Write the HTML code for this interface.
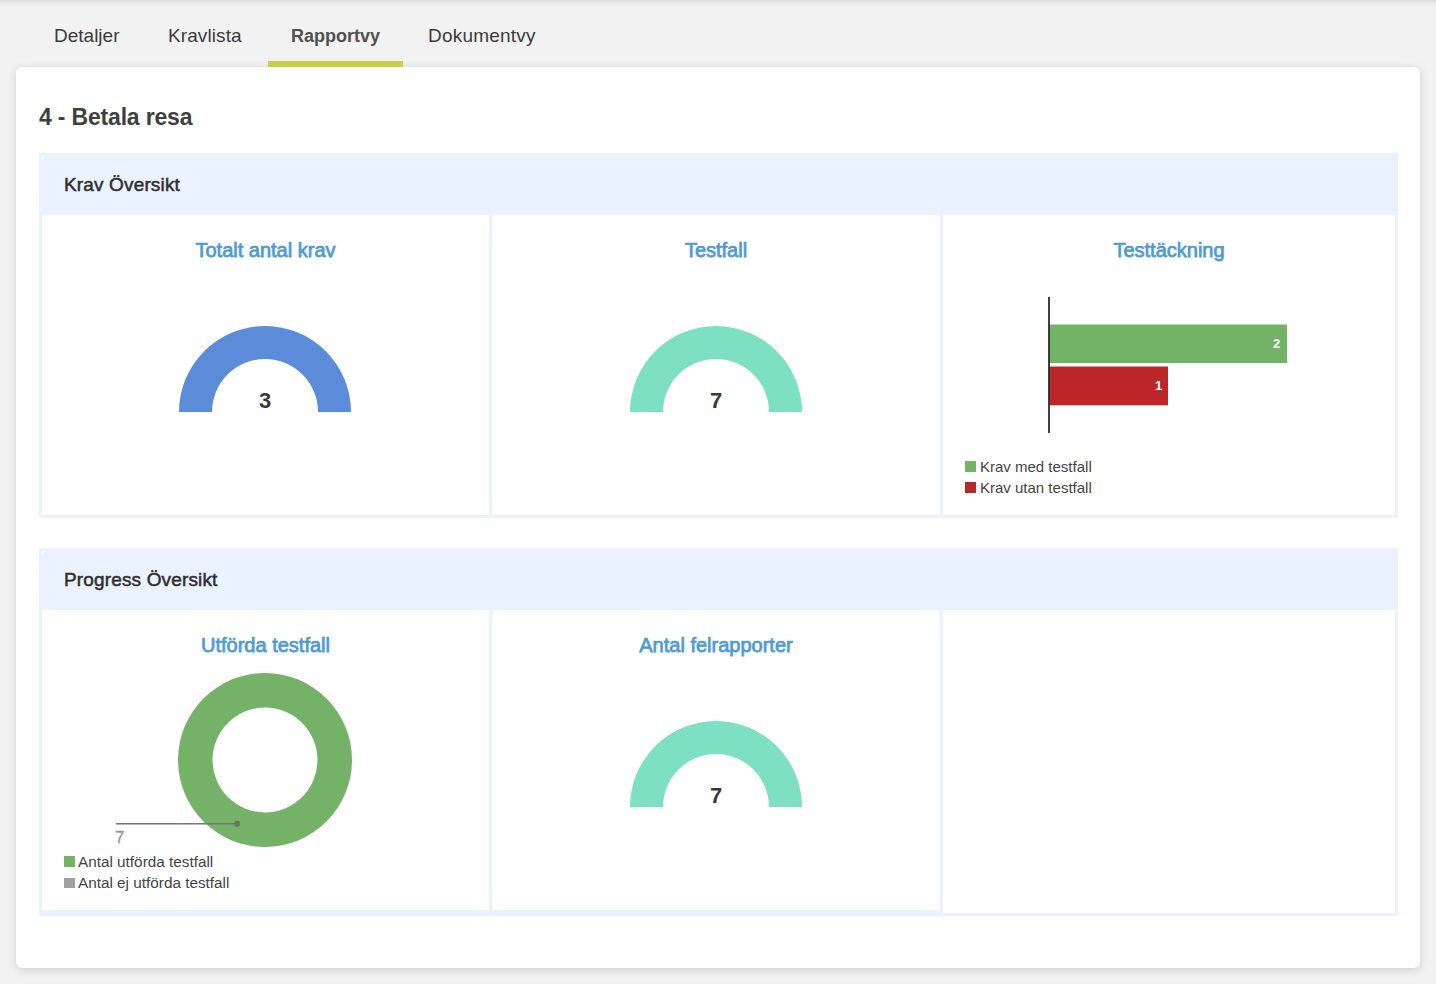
<!DOCTYPE html>
<html>
<head>
<meta charset="utf-8">
<style>
html,body{margin:0;padding:0;}
body{width:1436px;height:984px;overflow:hidden;background:#f2f2f2;position:relative;font-family:"Liberation Sans",sans-serif;}
.topshadow{position:absolute;left:0;top:0;width:1436px;height:10px;background:linear-gradient(to bottom,rgba(0,0,0,0.09) 0px,rgba(0,0,0,0.055) 2px,rgba(0,0,0,0.025) 4px,rgba(0,0,0,0) 8px);}
.abs{position:absolute;white-space:nowrap;}
.tab{position:absolute;top:25px;font-size:19px;line-height:22px;color:#3b3b3b;}
.tab.active{font-weight:700;color:#505050;font-size:18px;}
.underline{position:absolute;left:268px;top:61px;width:135px;height:6px;background:#c7d046;}
.card{position:absolute;left:16px;top:67px;width:1404px;height:901px;background:#fff;border-radius:6px;box-shadow:0 2px 10px rgba(0,0,0,0.15);}
.h1{position:absolute;left:39px;top:104px;font-size:23px;letter-spacing:-0.18px;line-height:26px;font-weight:700;color:#3f3f3f;}
.sec{position:absolute;left:39px;width:1359px;background:#e9f2fe;}
.sechead{position:absolute;left:64px;font-size:19px;letter-spacing:0.15px;line-height:22px;color:#2e2e2e;-webkit-text-stroke:0.5px #2e2e2e;}
.cell{position:absolute;background:#fff;}
.ctitle{position:absolute;font-size:20px;line-height:22px;color:#4e9bd3;-webkit-text-stroke:0.75px #4e9bd3;text-align:center;}
svg{position:absolute;left:0;top:0;}
.legend{position:absolute;font-size:15px;line-height:17px;color:#444;}
.sw{position:absolute;width:11px;height:11px;}
</style>
</head>
<body>
<div class="topshadow"></div>

<div class="tab" style="left:54px;">Detaljer</div>
<div class="tab" style="left:168px;letter-spacing:0.1px;">Kravlista</div>
<div class="tab active" style="left:291px;">Rapportvy</div>
<div class="tab" style="left:428px;letter-spacing:0.2px;">Dokumentvy</div>
<div class="card"></div>
<div class="underline"></div>

<div class="h1">4 - Betala resa</div>

<!-- Section 1 -->
<div class="sec" style="top:153px;height:365px;"></div>
<div class="sechead" style="top:174px;">Krav Översikt</div>
<div class="cell" style="left:42px;top:215px;width:447px;height:300px;"></div>
<div class="cell" style="left:492px;top:215px;width:448px;height:300px;"></div>
<div class="cell" style="left:943px;top:215px;width:452px;height:300px;"></div>

<div class="ctitle" style="left:42px;width:447px;top:239px;">Totalt antal krav</div>
<div class="ctitle" style="left:492px;width:448px;top:239px;">Testfall</div>
<div class="ctitle" style="left:943px;width:452px;top:239px;">Testtäckning</div>

<div class="abs" style="left:42px;top:156px;width:3px;height:1px;background:rgba(255,255,255,0.8);"></div>
<div class="abs" style="left:42px;top:156px;width:1px;height:3px;background:rgba(255,255,255,0.8);"></div>
<!-- Section 2 -->
<div class="sec" style="top:548px;height:368px;"></div>
<div class="sechead" style="top:569px;">Progress Översikt</div>
<div class="abs" style="left:42px;top:551px;width:3px;height:1px;background:rgba(255,255,255,0.8);"></div>
<div class="abs" style="left:42px;top:551px;width:1px;height:3px;background:rgba(255,255,255,0.8);"></div>
<div class="cell" style="left:42px;top:610px;width:447px;height:300px;"></div>
<div class="cell" style="left:492px;top:610px;width:448px;height:300px;"></div>
<div class="cell" style="left:943px;top:610px;width:452px;height:303px;"></div>

<div class="ctitle" style="left:42px;width:447px;top:634px;">Utförda testfall</div>
<div class="ctitle" style="left:492px;width:448px;top:634px;">Antal felrapporter</div>

<svg width="1436" height="984" viewBox="0 0 1436 984">
  <!-- semi donut 1 -->
  <path d="M179 412 A86 86 0 0 1 351 412 L318 412 A53 53 0 0 0 212 412 Z" fill="#5c8cd9"/>
  <!-- semi donut 2 -->
  <path d="M630 412 A86 86 0 0 1 802 412 L769 412 A53 53 0 0 0 663 412 Z" fill="#7ee0c3"/>
  <!-- semi donut 3 -->
  <path d="M630 807 A86 86 0 0 1 802 807 L769 807 A53 53 0 0 0 663 807 Z" fill="#7ee0c3"/>
  <!-- full donut -->
  <path fill-rule="evenodd" fill="#73b267" d="M178 760 A87 87 0 1 0 352 760 A87 87 0 1 0 178 760 Z M212.5 760 A52.5 52.5 0 1 0 317.5 760 A52.5 52.5 0 1 0 212.5 760 Z"/>
  <line x1="116" y1="823.8" x2="237" y2="823.8" stroke="#777" stroke-width="1.5"/>
  <circle cx="237" cy="823.8" r="3" fill="#6f6f6f"/>
  <!-- bars -->
  <rect x="1049.5" y="324.5" width="237.5" height="38.5" fill="#73b366"/>
  <rect x="1049.5" y="366.5" width="118.5" height="38.8" fill="#bd2629"/>
  <line x1="1049" y1="297" x2="1049" y2="433" stroke="#111" stroke-width="1.6"/>
</svg>

<div class="abs" style="left:259px;top:388.5px;font-size:22px;line-height:24px;font-weight:700;color:#393939;">3</div>
<div class="abs" style="left:710px;top:388.5px;font-size:22px;line-height:24px;font-weight:700;color:#393939;">7</div>
<div class="abs" style="left:710px;top:783.5px;font-size:22px;line-height:24px;font-weight:700;color:#393939;">7</div>

<div class="abs" style="left:1273px;top:336px;font-size:13px;line-height:15px;font-weight:700;color:#fff;">2</div>
<div class="abs" style="left:1155px;top:378px;font-size:13px;line-height:15px;font-weight:700;color:#fff;">1</div>

<div class="sw" style="left:965px;top:461px;background:#73b366;"></div>
<div class="legend" style="left:980px;top:458px;">Krav med testfall</div>
<div class="sw" style="left:965px;top:482px;background:#bd2629;"></div>
<div class="legend" style="left:980px;top:479px;">Krav utan testfall</div>

<div class="abs" style="left:115px;top:829px;font-size:17px;line-height:18px;color:#999;-webkit-text-stroke:0.3px #999;">7</div>
<div class="sw" style="left:64px;top:856px;background:#73b267;"></div>
<div class="legend" style="left:78px;top:853px;font-size:15.3px;">Antal utförda testfall</div>
<div class="sw" style="left:64px;top:878px;height:10px;background:#a0a0a0;"></div>
<div class="legend" style="left:78px;top:874px;font-size:15.3px;">Antal ej utförda testfall</div>

</body>
</html>
